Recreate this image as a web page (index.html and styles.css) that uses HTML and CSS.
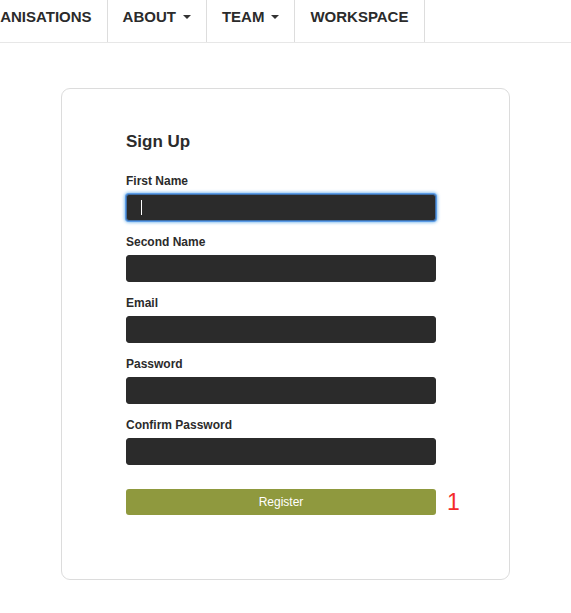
FILE: index.html
```html
<!DOCTYPE html>
<html>
<head>
<meta charset="utf-8">
<link rel="stylesheet" href="styles.css">
</head>
<body>
<nav class="navbar">
  <ul class="nav-list">
    <li class="nav-item">ORGANISATIONS</li>
    <li class="nav-item">ABOUT<span class="caret"></span></li>
    <li class="nav-item">TEAM<span class="caret"></span></li>
    <li class="nav-item">WORKSPACE</li>
  </ul>
</nav>
<main class="page">
  <section class="card">
    <h2 class="title">Sign Up</h2>
    <form class="form">
      <div class="field">
        <label class="label">First Name</label>
        <div class="input-wrap">
          <input class="input focused" type="text">
          <span class="fake-caret"></span>
        </div>
      </div>
      <div class="field">
        <label class="label">Second Name</label>
        <input class="input" type="text">
      </div>
      <div class="field">
        <label class="label">Email</label>
        <input class="input" type="text">
      </div>
      <div class="field">
        <label class="label">Password</label>
        <input class="input" type="password">
      </div>
      <div class="field">
        <label class="label">Confirm Password</label>
        <input class="input" type="password">
      </div>
      <div class="actions">
        <button class="btn" type="button">Register</button>
        <span class="count">1</span>
      </div>
    </form>
  </section>
</main>
</body>
</html>
```
FILE: styles.css
```css
* { box-sizing: border-box; }
html, body { margin: 0; padding: 0; background: #fff; }
body {
  font-family: "Liberation Sans", Arial, sans-serif;
  color: #333;
  overflow: hidden;
}
.navbar {
  height: 43px;
  border-bottom: 1px solid #e7e7e7;
  overflow: hidden;
}
.nav-list {
  display: flex;
  list-style: none;
  margin: 0 0 0 -49px;
  padding: 0;
  white-space: nowrap;
}
.nav-item {
  display: flex;
  align-items: flex-start;
  height: 42px;
  padding: 0 15px;
  border-right: 1px solid #ddd;
  font-size: 15px;
  font-weight: bold;
  line-height: 34px;
  color: #2b2b2b;
}
.nav-item:last-child { padding-right: 16px; }
.caret {
  display: inline-block;
  width: 0;
  height: 0;
  margin: 15px 0 0 7px;
  border-top: 4px solid #333;
  border-left: 4px solid transparent;
  border-right: 4px solid transparent;
}
.page {
  padding-top: 45px;
}
.card {
  width: 449px;
  margin: 0 auto;
  border: 1px solid #dcdcdc;
  border-radius: 9px;
  padding: 43px 72px 64px 64px;
}
.title {
  margin: 0 0 22px;
  font-size: 17px;
  line-height: 20px;
  font-weight: bold;
  color: #2b2b2b;
}
.form { width: 310px; margin: 0; }
.field {
  display: flex;
  flex-direction: column;
  margin-bottom: 14px;
}
.label {
  font-size: 12px;
  line-height: 15px;
  font-weight: bold;
  color: #2b2b2b;
  margin-bottom: 5px;
}
.input-wrap { position: relative; }
.input {
  display: block;
  width: 100%;
  height: 27px;
  margin: 0;
  border: 1px solid #2b2b2b;
  border-radius: 3px;
  background: #2b2b2b;
  padding: 0 12px;
  color: #fff;
  outline: none;
}
.input.focused {
  border-color: #3f6fa8;
  box-shadow: 0 0 0 1px #5b9be6, 0 0 3px 2px rgba(102, 175, 233, 0.7);
}
.fake-caret {
  position: absolute;
  left: 15px;
  top: 6px;
  width: 1px;
  height: 15px;
  background: #fff;
}
.actions {
  display: flex;
  align-items: center;
  margin-top: 24px;
}
.btn {
  flex: 0 0 310px;
  height: 26px;
  border: none;
  border-radius: 3px;
  background: #8f993e;
  color: #fff;
  font-family: "Liberation Sans", Arial, sans-serif;
  font-size: 12px;
  padding: 0;
}
.count {
  margin-left: 11px;
  font-size: 23px;
  line-height: 26px;
  color: #f42a2a;
}
```
